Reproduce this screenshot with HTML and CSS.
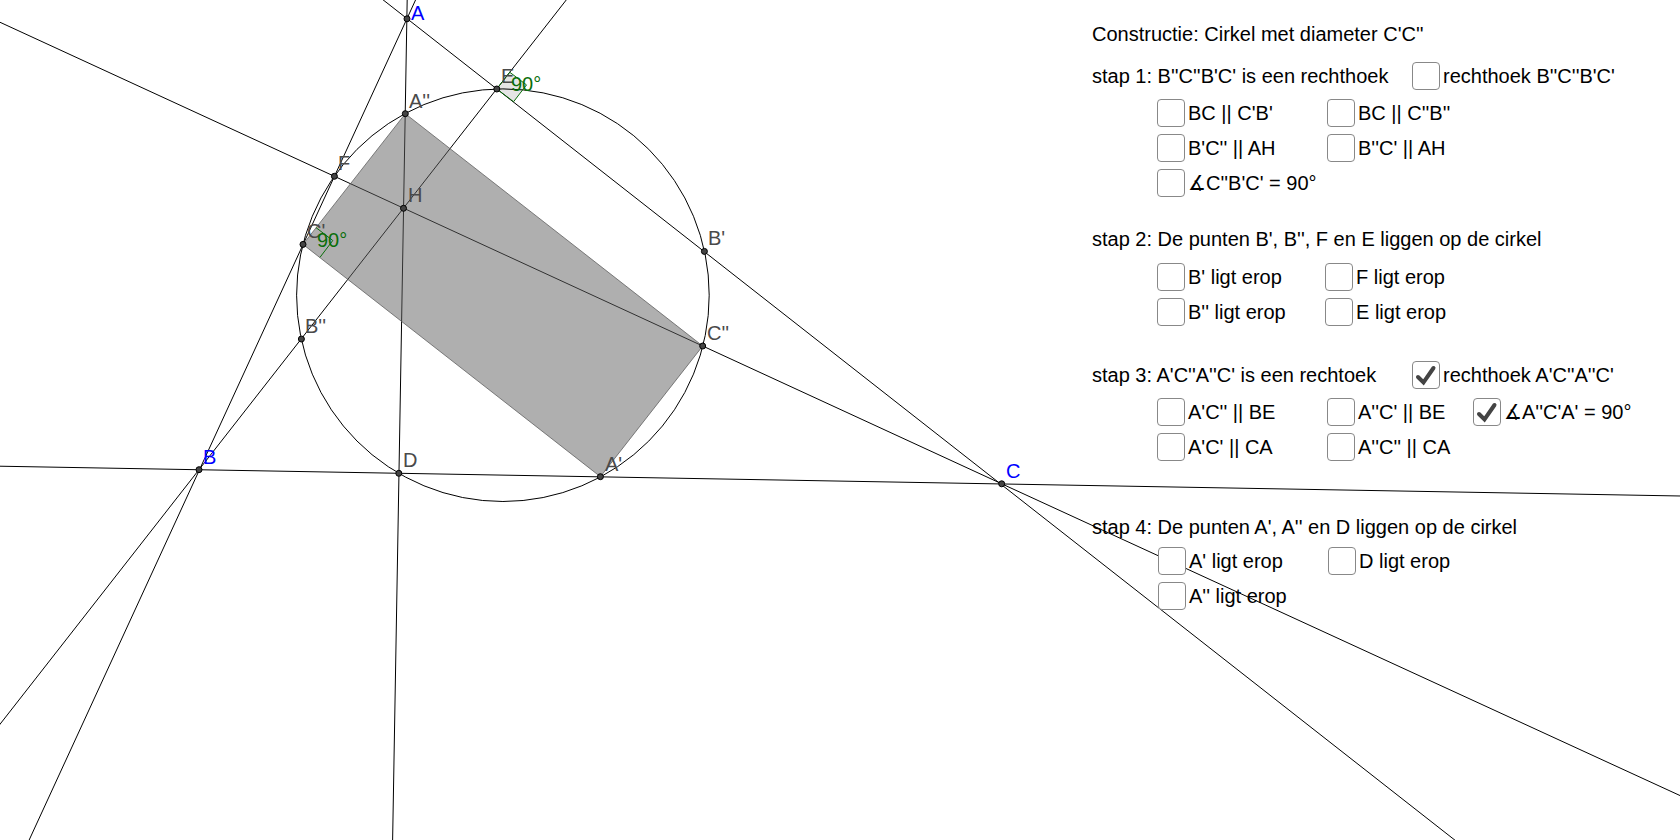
FILE: index.html
```html
<!DOCTYPE html>
<html lang="nl">
<head>
<meta charset="utf-8">
<meta name="viewport" content="width=device-width, initial-scale=1">
<title>Constructie: Cirkel met diameter C'C''</title>
<link rel="stylesheet" href="styles.css">
</head>
<body>
<main class="board">
  <svg class="figure" viewBox="0 0 1680 840" role="img" aria-label="Driehoek ABC met cirkel en rechthoek">
    <g class="lines">
      <path d="M-1 466.2 L1681 496"/>
      <path d="M407.2 -1 L392.6 841"/>
      <path d="M416 -1 L28.7 841"/>
      <path d="M382 -1 L1456 841"/>
      <path d="M567 -1 L-1 725.5"/>
      <path d="M-1 21.8 L334.4 176.3 L1001.7 483.8 L1681 796"/>
      <circle cx="502.9" cy="295.2" r="206.3"/>
    </g>
    <path class="area" d="M405.3 113.7 L702.7 346 L600.4 476.7 L303 244.4 Z"/>
    <g class="angle">
      <path d="M496.8 89 L509.7 72.2 L526.5 84.9 L513.6 101.7 Z"/>
      <path d="M316 227.6 L332.8 240.5 L320 257.3"/>
    </g>
    <g class="points">
      <circle cx="407" cy="18.8" r="3"/>
      <circle cx="405.3" cy="113.7" r="3"/>
      <circle cx="496.8" cy="89" r="3"/>
      <circle cx="334.4" cy="176.3" r="3"/>
      <circle cx="403.5" cy="208.3" r="3"/>
      <circle cx="303" cy="244.4" r="3"/>
      <circle cx="301.4" cy="339" r="3"/>
      <circle cx="704.4" cy="251.4" r="3"/>
      <circle cx="702.7" cy="346" r="3"/>
      <circle cx="199" cy="469.7" r="3"/>
      <circle cx="398.8" cy="473.3" r="3"/>
      <circle cx="600.4" cy="476.7" r="3"/>
      <circle cx="1001.7" cy="483.8" r="3"/>
    </g>
    <g class="names">
      <text class="free" x="411" y="20">A</text>
      <text class="free" x="203" y="464">B</text>
      <text class="free" x="1006" y="478">C</text>
      <text x="409" y="108">A''</text>
      <text x="501" y="83">E</text>
      <text x="338" y="170">F</text>
      <text x="408" y="202">H</text>
      <text x="307" y="238">C'</text>
      <text x="305" y="333">B''</text>
      <text x="708" y="245">B'</text>
      <text x="707" y="340">C''</text>
      <text x="403" y="467">D</text>
      <text x="605" y="471">A'</text>
      <text class="size" x="511" y="91">90°</text>
      <text class="size" x="317" y="247">90°</text>
    </g>
  </svg>

  <form class="steps">
    <h1 class="title">Constructie: Cirkel met diameter C'C''</h1>

    <section class="step">
      <div class="head">
        <h2>stap 1: B''C''B'C' is een rechthoek</h2>
        <label class="option"><input type="checkbox">rechthoek B''C''B'C'</label>
      </div>
      <div class="options">
        <label class="option"><input type="checkbox">BC || C'B'</label>
        <label class="option"><input type="checkbox">BC || C''B''</label>
        <label class="option first"><input type="checkbox">B'C'' || AH</label>
        <label class="option"><input type="checkbox">B''C' || AH</label>
        <label class="option first"><input type="checkbox">∡C''B'C' = 90°</label>
      </div>
    </section>

    <section class="step on-circle-b">
      <h2>stap 2: De punten B', B'', F en E liggen op de cirkel</h2>
      <div class="options">
        <label class="option"><input type="checkbox">B' ligt erop</label>
        <label class="option"><input type="checkbox">F ligt erop</label>
        <label class="option first"><input type="checkbox">B'' ligt erop</label>
        <label class="option"><input type="checkbox">E ligt erop</label>
      </div>
    </section>

    <section class="step rectangle-a">
      <div class="head">
        <h2>stap 3: A'C''A''C' is een rechtoek</h2>
        <label class="option"><input type="checkbox" checked>rechthoek A'C''A''C'</label>
      </div>
      <div class="options">
        <label class="option"><input type="checkbox">A'C'' || BE</label>
        <label class="option"><input type="checkbox">A''C' || BE</label>
        <label class="option"><input type="checkbox" checked>∡A''C'A' = 90°</label>
        <label class="option first"><input type="checkbox">A'C' || CA</label>
        <label class="option"><input type="checkbox">A''C'' || CA</label>
      </div>
    </section>

    <section class="step on-circle-a">
      <h2>stap 4: De punten A', A'' en D liggen op de cirkel</h2>
      <div class="options">
        <label class="option"><input type="checkbox">A' ligt erop</label>
        <label class="option"><input type="checkbox">D ligt erop</label>
        <label class="option first"><input type="checkbox">A'' ligt erop</label>
      </div>
    </section>
  </form>
</main>
</body>
</html>
```
FILE: styles.css
```css
* {
  box-sizing: border-box;
}

body {
  margin: 0;
  background: #fff;
  color: #000;
  font: 20px/24px "Liberation Sans", Arial, sans-serif;
}

/* The figure and the step list share one cell: lines run on beneath the list. */
.board {
  display: grid;
  overflow: hidden;
}

.figure,
.steps {
  grid-area: 1 / 1;
}

.figure {
  display: block;
  width: 100%;
  height: auto;
}

.lines {
  fill: none;
  stroke: #000;
  stroke-width: 1;
}

.area {
  fill: #606060;
  fill-opacity: 0.5;
  stroke: #606060;
  stroke-opacity: 0.8;
}

.angle {
  fill: #000;
  fill-opacity: 0.1;
  stroke: #0a6e0a;
}

.angle path + path {
  fill: none;
}

.points {
  fill: #444;
  stroke: #000;
}

.names {
  fill: #4a4a4a;
}

.names .free {
  fill: #00f;
}

.names .size {
  fill: #0a6e0a;
}

.steps {
  position: relative;
  margin-left: 65%;
  padding-top: 22px;
  white-space: nowrap;
}

.title,
h2 {
  margin: 0;
  font-size: 20px;
  font-weight: 400;
  line-height: 24px;
}

.title {
  margin-bottom: 16px;
}

.head {
  display: grid;
  grid-template-columns: 320px auto;
  align-items: center;
}

.options {
  display: grid;
  grid-template-columns: 170px 146px auto;
  row-gap: 7px;
  margin-top: 9px;
  padding-left: 65px;
}

.on-circle-b {
  margin-top: 30px;
}

.on-circle-b .options {
  grid-template-columns: 168px auto;
  margin-top: 12px;
}

.rectangle-a {
  margin-top: 35px;
}

.on-circle-a {
  margin-top: 54px;
}

.on-circle-a .options {
  margin-top: 8px;
  padding-left: 66px;
}

.option {
  display: flex;
  align-items: center;
  gap: 3px;
}

.first {
  grid-column: 1;
}

input {
  appearance: none;
  flex: none;
  width: 28px;
  height: 28px;
  margin: 0;
  border: 1px solid #888;
  border-radius: 4px;
  background: #fff;
}

input:checked {
  background: #fff url("data:image/svg+xml,%3Csvg xmlns='http://www.w3.org/2000/svg' viewBox='0 0 26 26'%3E%3Cpath d='M5 15L10.5 20.5L20.5 6' fill='none' stroke='%23444' stroke-width='4' stroke-linecap='round'/%3E%3C/svg%3E") center / 26px 26px no-repeat;
}
```
